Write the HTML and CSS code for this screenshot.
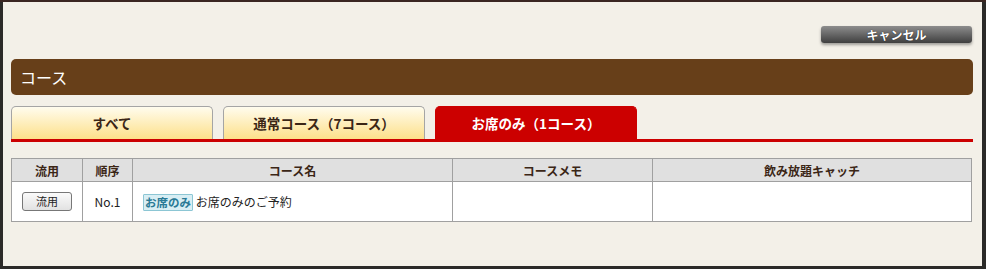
FILE: index.html
```html
<!DOCTYPE html>
<html lang="ja">
<head>
<meta charset="utf-8">
<link rel="stylesheet" href="styles.css">
</head>
<body>
<div class="dialog">
  <div class="toolbar">
    <button class="cancel" type="button">キャンセル</button>
  </div>
  <div class="section-title">コース</div>
  <div class="tabs">
    <div class="tab">すべて</div>
    <div class="tab">通常コース（7コース）</div>
    <div class="tab active">お席のみ（1コース）</div>
  </div>
  <table class="course-table">
    <thead>
      <tr>
        <th class="c-use">流用</th>
        <th class="c-order">順序</th>
        <th class="c-name">コース名</th>
        <th class="c-memo">コースメモ</th>
        <th class="c-catch">飲み放題キャッチ</th>
      </tr>
    </thead>
    <tbody>
      <tr>
        <td class="center"><button class="use-btn" type="button">流用</button></td>
        <td class="center">No.1</td>
        <td><span class="badge">お席のみ</span> お席のみのご予約</td>
        <td></td>
        <td></td>
      </tr>
    </tbody>
  </table>
</div>
</body>
</html>
```

FILE: styles.css
```css
html, body {
  margin: 0;
  padding: 0;
}
body {
  background: #2b2a28;
  font-family: "Noto Sans CJK JP", "Noto Sans", sans-serif;
  height: 269px;
  overflow: hidden;
  border-top: 2px solid #3a2622;
  box-sizing: border-box;
}
.dialog {
  margin-left: 3px;
  width: 979px;
  height: 264px;
  background: #f3f0e8;
  padding: 0 9px 0 8px;
  box-sizing: border-box;
}
.toolbar {
  display: flex;
  justify-content: flex-end;
  padding-top: 24px;
}
.cancel {
  width: 151px;
  height: 17px;
  margin: 0 1px 0 0;
  padding: 0;
  border: 0;
  border-radius: 3px;
  background: linear-gradient(#8d8d8d, #3f3f3f);
  box-shadow: 0 2px 3px rgba(0,0,0,0.35);
  color: #fff;
  font-family: inherit;
  font-weight: bold;
  font-size: 12px;
  line-height: 17px;
  text-shadow: 0 0 1px #000;
}
.section-title {
  margin-top: 16px;
  height: 36px;
  line-height: 36px;
  border-radius: 5px;
  background: #673f19;
  color: #fff;
  font-size: 16px;
  padding-left: 9px;
}
.tabs {
  margin-top: 11px;
  display: flex;
  gap: 10px;
  border-bottom: 3px solid #cc0000;
}
.tab {
  width: 200px;
  height: 32px;
  line-height: 32px;
  border: 1px solid #a5a5a5;
  border-bottom: 0;
  border-radius: 5px 5px 0 0;
  background: linear-gradient(#fffcee, #fde08a);
  color: #3b2616;
  font-size: 13.5px;
  font-weight: bold;
  text-align: center;
}
.tab.active {
  border-color: #cc0000;
  background: #cc0000;
  color: #fff;
}
.course-table {
  margin-top: 16px;
  width: 961px;
  border-collapse: collapse;
  table-layout: fixed;
  font-size: 12px;
}
.course-table th,
.course-table td {
  border: 1px solid #a0a0a0;
  padding: 0;
}
.course-table th {
  height: 22px;
  background: #e0e0e0;
  color: #3b2616;
  font-weight: bold;
  font-size: 12px;
}
.course-table td {
  height: 39px;
  background: #fff;
  color: #222;
  padding-left: 10px;
}
.course-table td.center {
  text-align: center;
  padding-left: 0;
}
.c-use { width: 70px; }
.c-order { width: 49px; }
.c-name { width: 319px; }
.c-memo { width: 199px; }
.use-btn {
  width: 50px;
  height: 19px;
  padding: 0;
  border: 1px solid #777;
  border-radius: 3px;
  background: linear-gradient(#fafafa, #e2e2e2);
  font-family: inherit;
  font-size: 11px;
  color: #222;
  line-height: 17px;
}
.badge {
  display: inline-block;
  padding: 0 1px;
  border: 1px solid #8cc6d4;
  background: #d8eef4;
  color: #2a7a96;
  font-weight: bold;
  font-size: 11.5px;
  line-height: 15px;
  border-radius: 1px;
}
```
